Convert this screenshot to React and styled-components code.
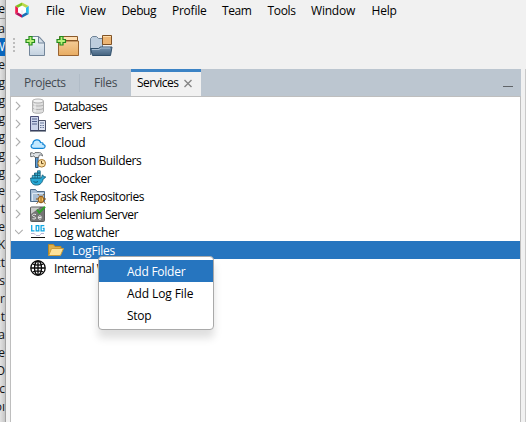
import React from 'react';
import styled, { createGlobalStyle } from 'styled-components';

const Global = createGlobalStyle`
  * { box-sizing: border-box; }
  body { margin: 0; background: #f1f1f1; font: 12px/18px "Open Sans", "Noto Sans", sans-serif; color: #000; overflow: hidden; }
`;

const Screen = styled.div`display: flex; width: 526px; height: 422px; overflow: hidden;`;
const Behind = styled.div`
  width: 6px; height: 422px; overflow: hidden; flex: none;
  background: linear-gradient(90deg, #e2e2e2, #c6c6c6);
  border-right: 1px solid #a2a2a2;
`;
const BehindHead = styled.div`height: 19px; margin-bottom: 1px; border-bottom: 1px solid #909090; display: flex; justify-content: flex-end; line-height: 17px;`;
const BehindLine = styled.div`
  height: 18px; display: flex; justify-content: flex-end; white-space: nowrap;
  color: ${p => (p.$on ? '#fff' : '#111')};
  background: ${p => (p.$on ? '#0866bd' : 'transparent')};
`;
const Frame = styled.div`width: 520px; height: 422px; display: flex; flex-direction: column;`;
const Menu = styled.nav`height: 22px; display: flex; align-items: center; padding-left: 8px;`;
const MenuItem = styled.span`
  width: ${p => p.$w}px; flex: none; white-space: nowrap; letter-spacing: ${p => p.$ls || 0}px;
`;
const LogoBox = styled.span`width: 32px; height: 16px; display: flex; flex: none; margin-bottom: 2px;`;
const Toolbar = styled.div`height: 47px; display: flex; align-items: flex-start; padding: 13px 0 0 6px;`;
const Grip = styled.div`
  width: 2px; height: 14px; margin: 3px 11px 0 1px; display: flex; flex-direction: column; justify-content: space-between;
  i { width: 2px; height: 2px; background: #bdbdbd; }
`;
const Tool = styled.span`width: 24px; height: 24px; margin-left: ${p => p.$shift || 0}px; margin-right: ${p => p.$gap || 7}px; display: flex;`;
const Body = styled.div`display: flex; flex: 1; padding-left: 4px;`;
const Panel = styled.section`width: 511px; display: flex; flex-direction: column;`;
const NextPanel = styled.div`width: 1px; margin-left: 4px; background: #c9c9c9;`;
const Tabs = styled.div`height: 27px; display: flex; background: #bcc6d0;`;
const Tab = styled.div`
  width: ${p => p.$w}px; padding: ${p => (p.$on ? '2px' : '5px')} 0 0 ${p => p.$pad}px; white-space: nowrap;
  display: flex; gap: ${p => p.$gap || 5}px; letter-spacing: ${p => p.$ls || 0}px;
  color: ${p => (p.$on ? '#000' : '#444a50')};
  background: ${p => (p.$on ? '#f1f1f1' : 'transparent')};
  border-top: ${p => (p.$on ? '3px solid #3c83c5' : '0')};
  svg { margin-top: 5px; }
`;
const Sep = styled.i`width: 1px; height: 18px; margin-top: 5px; background: #b1bcc7;`;
const Minimize = styled.i`width: 10px; height: 1px; background: #606468; margin: 17px 8px 0 auto;`;
const Tree = styled.div`flex: 1; background: #fff; border: 1px solid #bebebe; border-bottom: 0;`;
const Row = styled.div`
  height: 18px; display: flex; align-items: center; padding-left: ${p => (p.$child ? 37 : 4)}px;
  color: ${p => (p.$on ? '#fff' : '#000')}; background: ${p => (p.$on ? '#2675bf' : 'transparent')};
`;
const Toggle = styled.span`width: 15px; height: 16px; display: flex; flex: none;`;
const IconBox = styled.span`width: 16px; height: 16px; margin-right: 8px; flex: none; display: flex;`;
const Label = styled.span`white-space: nowrap; letter-spacing: ${p => p.$ls || 0}px; padding-top: 1px;`;
const Popup = styled.div`
  position: absolute; left: 98px; top: 256px; width: 116px; height: 74px; padding: 3px 0;
  background: #fff; border: 1px solid #a9a9a9; border-radius: 4px; box-shadow: 0 8px 9px rgba(0,0,0,.13);
`;
const PopupItem = styled.div`
  height: 22px; line-height: 23px; padding-left: 28px; white-space: nowrap; letter-spacing: ${p => p.$ls || 0}px;
  color: ${p => (p.$on ? '#fff' : '#000')}; background: ${p => (p.$on ? '#2675bf' : 'transparent')};
`;

const S = ({ s = 16, children }) => <svg width={s} height={s} viewBox={`0 0 ${s} ${s}`} fill="none">{children}</svg>;

const Logo = () => (
  <S>
    <path d="M8 .4 14.800 4v8L8 15.800 1.200 12V4z" fill="#fff" />
    <path d="M1.200 4 8 .4v3L4 5.700z" fill="#7fc21e" /><path d="M8 .4 14.800 4 12 5.700 8 3.400z" fill="#bcd84a" />
    <path d="M1.200 4 4 5.700v4.800L1.200 12z" fill="#ee1c4e" /><path d="M1.200 12 4 10.400l4 2.300v3.100z" fill="#b3125f" />
    <path d="M14.800 4v8L12 10.400V5.700z" fill="#2bbdea" /><path d="M14.800 12 8 15.800v-3.100l4-2.300z" fill="#1a6fb5" />
    <path d="M8 8.200v4.500" stroke="#e4e4ea" />
  </S>
);
const Plus = () => <path d="M4 1.500h3V4.500H9.500v3H7V10H4V7.500H1v-3h3z" fill="#b9f07a" stroke="#238c1c" strokeWidth="1.2" />;
const NewFile = () => (
  <S s={24}><defs><linearGradient id="nf" x2="0" y2="1"><stop stopColor="#f4f8fb" /><stop offset="1" stopColor="#c3d1df" /></linearGradient></defs>
    <path d="M4.500 1.500h9.500l5.500 6v13h-15z" fill="url(#nf)" stroke="#73869a" /><path d="M13.500 1.500v6.500h6z" fill="#d6e0ea" stroke="#73869a" /><Plus /></S>
);
const NewProject = () => (
  <S s={24}><defs><linearGradient id="np" x2="0" y2="1"><stop stopColor="#f4cb96" /><stop offset="1" stopColor="#e8ac62" /></linearGradient></defs>
    <path d="M3.500 6.500V1.500h18v5" fill="#ffdfb2" stroke="#8b5a2a" /><path d="M2.500 6h20v14.500h-20z" fill="url(#np)" stroke="#996331" /><path d="M3 5.500h19" stroke="#855426" /><Plus /></S>
);
const OpenProject = () => (
  <S s={24}><defs><linearGradient id="op" x2="0" y2="1"><stop stopColor="#7896b3" /><stop offset="1" stopColor="#45637f" /></linearGradient></defs>
    <path d="M1.500 20V3.500l2-2h4l2 2h4v10" fill="#bdcddd" stroke="#6e8296" /><path d="M13.500.5h9v9h-9z" fill="#ecb574" stroke="#805225" /><path d="M14 1.500h8" stroke="#ffdca8" />
    <path d="M1.500 13.500h8l2-1.500h11.500l-1.500 8.500h-18z" fill="url(#op)" stroke="#304f6b" /><path d="M3 14.500h7l2-1.500h9" stroke="#a9bfd4" /></S>
);
const Chevron = ({ open }) => <S>{open ? <path d="m-.2 5.700 4.200 4.200 4.200-4.200" stroke="#adadad" strokeWidth="1.200" /> : <path d="m1 3.700 4.300 4.300L1 12.300" stroke="#adadad" strokeWidth="1.200" />}</S>;

const icons = {
  db: <S><path d="M2.500 3v10.500c0 2.400 11 2.400 11 0V3" fill="#dedede" stroke="#b0b0b0" /><ellipse cx="8" cy="3" rx="5.500" ry="2" fill="#f3f3f3" stroke="#b0b0b0" /><path d="M3 6.500c0 2 10.500 2 10.500 0M3 10c0 2 10.500 2 10.500 0" stroke="#b0b0b0" /><path d="M5 6v8" stroke="#f5f5f5" /></S>,
  server: <S><path d="M.5.500h8v14h-8z" fill="#cbd3ea" stroke="#4c4f78" /><path d="M2 3h5M2 5.500h5M2 8h5" stroke="#53608b" /><path d="M8.500 4.500h7v10h-7z" fill="#dfe4f2" stroke="#4b5168" /><path d="M10 7h4" stroke="#67789a" /><path d="M10 9.500h4M10 11.500h4" stroke="#67789a" strokeDasharray="1 .5" /><path d="M0 15h16" stroke="#26324a" /></S>,
  cloud: <S><path d="M3.500 14.300C.5 14.300.3 10.600 2.800 10 3 5.100 9.500 4.400 10.600 8.500c2.400-.2 2.700 1.400 2.400 2 3 .3 2.600 3.800 0 3.800z" fill="#c2e8ff" stroke="#1284d5" strokeWidth="1.200" /></S>,
  hudson: <S>
    <path d="M5.500 5h2.600v10.500H5.500z" fill="#5d9cd4" stroke="#24496b" strokeWidth=".9" />
    <path d="M.6 3.500V.8h2l.7.8h1L5 .6h4.500c2 .3 2.800 1.500 3 3.400-1.200-1.200-2.200-1.200-3.300-.8L8.600 5.500H5L4 4H3l-.6.6H.6z" fill="#dfe3e6" stroke="#5b6063" strokeWidth=".9" />
    <circle cx="11.700" cy="11.300" r="3.800" fill="#fbe0a4" stroke="#a5742c" /><path d="M11.500 8.800v2.800h2" stroke="#6a4716" />
  </S>,
  docker: <S>
    <path d="M.6 8h10.800c.6-1 .3-2.200 1.200-3.200l1.300 2h1.700c-.5 1.400-1.400 1.900-2.400 2-.9 4.200-3 6.300-6.800 6.300C2.500 15.100.6 12.500.6 8z" fill="#27a9d6" stroke="#155e78" strokeWidth=".9" />
    <path d="M2.300 5.400h7.900v2.500H2.300zM4.500 3h5.700v2.400H4.500zM7.500.8h2.700V3H7.500z" fill="#3fbde2" stroke="#155e78" strokeWidth=".8" />
    <path d="M5 3v5M7.500 3v5" stroke="#155e78" strokeWidth=".8" /><path d="M3.500 11.500c1.500 1 3 1 4.500 0" stroke="#0f5873" />
  </S>,
  task: <S><path d="M.5 13.500v-12h5l1.500 2h7.500v10z" fill="#a9bfd6" stroke="#4f6d8b" /><path d="M2.500 13V5.500h11" stroke="#dce8f3" /><ellipse cx="11" cy="11.500" rx="2.600" ry="3.400" fill="#ffc963" stroke="#885012" /><path d="M9 7.500 7.800 6M13 7.500 14.200 6M8.200 11H6m7.800 0H16m-7.500 3-2 1.500m7-1.500 2 1.500M11 8.500v6" stroke="#8a550f" /></S>,
  selenium: <S><rect x=".5" y="1" width="14" height="14.500" rx="1" fill="#747474" stroke="#5a5a5a" /><path d="M1 1.500h9L1 8z" fill="#c8c8c8" /><path d="M6 8.500c-4-1-4.500 1.700-2 2.200 3 .7 2 3-1.500 2M8.300 11.500h3c0-2.500-3-2.200-3 0 0 2 2 2 3 1.200" stroke="#eee" /><path d="m7 3.500 2.300 3.200L15 .7" stroke="#2fa12c" strokeWidth="2" /></S>,
  log: <S><path d="M1.700 1v5.800h2.800M6.200 1.600h2.600v5.200H6.200zM14.300 1.600h-3.200v5.200h2.900V4.300h-1.300" stroke="#12a8e4" strokeWidth="1.300" /><path d="M1 9.500h3.500m0 .8h1m4.500 0h1m0-.8h3M6 11.500h4" stroke="#b3add0" strokeWidth=".9" /><path d="M1 13.500h14" stroke="#111" /></S>,
  folder: <S><path d="M.5 13.500V2.500h5l1.500 2h6v2.500" fill="#dcb04e" stroke="#b88827" /><path d="M.7 13.500 3.500 6.500h12l-3 7z" fill="#ffe39a" stroke="#c99b3a" /></S>,
  globe: <S><g stroke="#080808" strokeWidth="1.300"><circle cx="8" cy="8" r="7.200" /><ellipse cx="8" cy="8" rx="3.500" ry="7.200" /><path d="M8 1v14M1 8h14M2.600 4c3 1.300 7.800 1.300 10.800 0M2.600 12c3-1.300 7.800-1.300 10.800 0" /></g></S>,
};

const menu = [['File', 34, -.1], ['View', 41.5, -.1], ['Debug', 50.5, -.4], ['Profile', 50, -.25], ['Team', 45.5, -.4], ['Tools', 43.5, -.35], ['Window', 60.5, -.2], ['Help', 30, -.2]];
const rows = [['Databases', 'db', '', -.6], ['Servers', 'server', '', -.6], ['Cloud', 'cloud', '', -.2], ['Hudson Builders', 'hudson', '', -.36], ['Docker', 'docker', '', -.4], ['Task Repositories', 'task', '', -.46], ['Selenium Server', 'selenium', '', -.46], ['Log watcher', 'log', 'open', -.27], ['LogFiles', 'folder', 'child', -.2], ['Internal Web', 'globe', 'leaf', -.45]];
const behind = ['na', 'W', 'e', 'g', 'g', 'g', 'g', 'g', 'g', 'fe', 'rt', 'ie', 'K', 'ct', 'as', 'or', 'at', 'a', 'be', 'O', 'oc', 'oı'];

export default function App() {
  return (
    <><Global />
      <Screen>
        <Behind><BehindHead>le</BehindHead>{behind.map((t, i) => <BehindLine key={i} $on={i === 1}>{t}</BehindLine>)}</Behind>
        <Frame>
          <Menu><LogoBox><Logo /></LogoBox>{menu.map(([t, w, ls]) => <MenuItem key={t} $w={w} $ls={ls}>{t}</MenuItem>)}</Menu>
          <Toolbar><Grip><i /><i /><i /><i /></Grip><Tool $shift={-1} $gap={7}><NewFile /></Tool><Tool $gap={9}><NewProject /></Tool><Tool><OpenProject /></Tool></Toolbar>
          <Body>
            <Panel>
              <Tabs>
                <Tab $w={69} $pad={14} $ls={-.4}>Projects</Tab><Sep /><Tab $w={51} $pad={14} $ls={-.3}>Files</Tab>
                <Tab $w={70} $pad={6} $ls={-.5} $on $gap={6}>Services<svg width="8" height="9" viewBox="0 0 8 9"><path d="m.5 1 7 7m0-7-7 7" stroke="#858585" strokeWidth="1.400" /></svg></Tab>
                <Minimize />
              </Tabs>
              <Tree>
                {rows.map(([t, icon, kind, ls]) => (
                  <Row key={t} $child={kind === 'child'} $on={kind === 'child'}>
                    {kind !== 'child' && <Toggle>{kind !== 'leaf' && <Chevron open={kind === 'open'} />}</Toggle>}
                    <IconBox>{icons[icon]}</IconBox><Label $ls={ls}>{t}</Label>
                  </Row>
                ))}
              </Tree>
            </Panel>
            <NextPanel />
          </Body>
        </Frame>
      </Screen>
      <Popup><PopupItem $on $ls={-.25}>Add Folder</PopupItem><PopupItem $ls={-.1}>Add Log File</PopupItem><PopupItem $ls={-.3}>Stop</PopupItem></Popup>
    </>
  );
}
